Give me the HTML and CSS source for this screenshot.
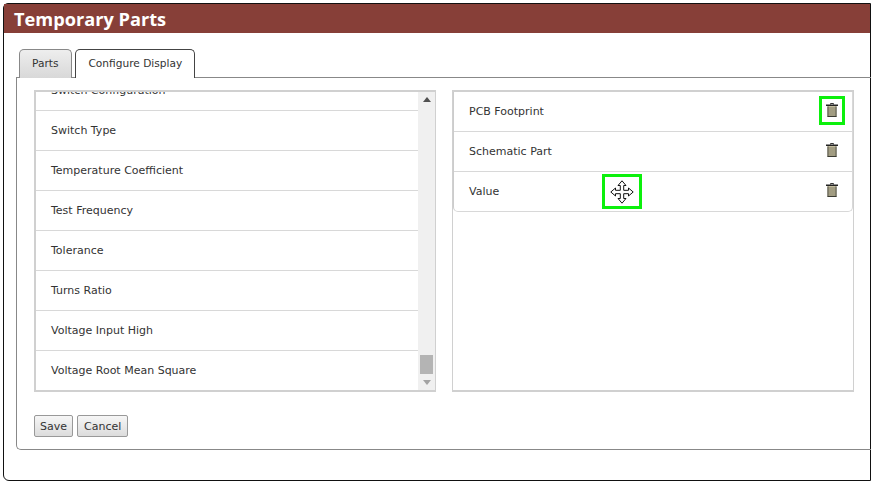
FILE: index.html
```html
<!DOCTYPE html>
<html lang="en">
<head>
<meta charset="utf-8">
<title>Temporary Parts</title>
<link rel="stylesheet" href="styles.css">
</head>
<body>
<svg class="defs" width="0" height="0" aria-hidden="true">
  <defs>
    <symbol id="trash" viewBox="0 0 12 14">
      <path d="M4.500 1.500V.5h3v1" fill="none" stroke="#333" stroke-width="1"/>
      <rect x="0" y="1.500" width="12" height="1.500" fill="#222"/>
      <rect x="1.500" y="3" width="9" height="11" fill="#c4bd9e"/>
      <path d="M2 3.500v10M10 3.500v10M1.500 13.500h9" stroke="#3a3a32" stroke-width="1" fill="none"/>
      <path d="M4 4v9M6 4v9M8 4v9" stroke="#807c66" stroke-width="1" fill="none"/>
    </symbol>
  </defs>
</svg>
<div class="frame">
  <h1 class="title">Temporary Parts</h1>
  <div class="tabs">
    <span class="tab tab-parts">Parts</span>
    <span class="tab tab-active">Configure Display</span>
  </div>
  <div class="panel">
    <div class="columns">
      <div class="box box-left">
        <div class="list-view">
          <ul class="list">
            <li>Switch Configuration</li>
            <li>Switch Type</li>
            <li>Temperature Coefficient</li>
            <li>Test Frequency</li>
            <li>Tolerance</li>
            <li>Turns Ratio</li>
            <li>Voltage Input High</li>
            <li>Voltage Root Mean Square</li>
          </ul>
        </div>
        <div class="scrollbar">
          <span class="arrow arrow-up"></span>
          <span class="thumb"></span>
          <span class="arrow arrow-down"></span>
        </div>
      </div>
      <div class="box box-right">
        <ul class="selected">
          <li>
            <span>PCB Footprint</span>
            <svg class="trash"><use href="#trash"/></svg>
            <span class="mark mark-trash"></span>
          </li>
          <li>
            <span>Schematic Part</span>
            <svg class="trash"><use href="#trash"/></svg>
          </li>
          <li>
            <span>Value</span>
            <svg class="trash"><use href="#trash"/></svg>
            <span class="mark mark-move">
              <svg class="move" viewBox="0 0 24 24">
                <path d="M12 .8 16 5.500h-2.300V10.300H18.500V8L23.200 12 18.500 16V13.700H13.700V18.500H16L12 23.200 8 18.500H10.300V13.700H5.500V16L.8 12 5.500 8V10.300H10.300V5.500H8Z" fill="#fff" stroke="#111" stroke-width="1"/>
              </svg>
            </span>
          </li>
        </ul>
      </div>
    </div>
    <div class="actions">
      <button class="btn btn-save" type="button">Save</button>
      <button class="btn" type="button">Cancel</button>
    </div>
  </div>
</div>
</body>
</html>
```
FILE: styles.css
```css
html, body {
  margin: 0;
  padding: 0;
  background: #fff;
  overflow: hidden;
}

body {
  font-family: "DejaVu Sans", sans-serif;
  font-size: 11px;
  color: #333;
}

.defs {
  display: block;
  height: 0;
}

.frame {
  box-sizing: border-box;
  width: 868px;
  height: 478px;
  margin: 3px 0 0 3px;
  border: 1px solid #111;
  border-radius: 5px 0 0 6px;
}

.title {
  height: 29px;
  margin: 0;
  padding-left: 10px;
  background: #873f38;
  color: #fff;
  font-family: "Open Sans", sans-serif;
  font-size: 18.2px;
  font-weight: 700;
  line-height: 31px;
}

.tabs {
  display: flex;
  gap: 3px;
  height: 29px;
  margin: 16px 0 -1px 15px;
}

.tab {
  box-sizing: border-box;
  height: 29px;
  padding: 0 12px;
  border: 1px solid #888;
  border-bottom: 0;
  border-radius: 5px 5px 0 0;
  background: linear-gradient(#eee, #d8d8d8);
  font-size: 10.6px;
  line-height: 26px;
}

.tab-parts {
  padding-right: 13px;
}

.tab-active {
  position: relative;
  z-index: 1;
  height: 29px;
  border-color: #444;
  background: #fff;
}

.panel {
  box-sizing: border-box;
  height: 373px;
  margin: 0 -4px 0 12px;
  padding: 12px 0 0 17px;
  border: 1px solid #888;
  border-right: 0;
  border-radius: 0 0 0 5px;
}

.columns {
  display: flex;
  gap: 16px;
}

.box {
  box-sizing: border-box;
  width: 402px;
  height: 302px;
  border: 1px solid #d0d0d0;
  border-top-width: 2px;
  border-bottom-width: 2px;
}

.box-left {
  display: flex;
  border-left-width: 2px;
}

.list-view {
  flex: 1;
  overflow: hidden;
}

.list,
.selected {
  margin: 0;
  padding: 0;
  list-style: none;
}

.list {
  margin-top: -21px;
}

.list li {
  box-sizing: border-box;
  height: 40px;
  padding-left: 15px;
  border-bottom: 1px solid #d8d8d8;
  line-height: 39px;
}

.scrollbar {
  display: flex;
  flex-direction: column;
  align-items: center;
  width: 17px;
  background: #f0f0f0;
}

.arrow {
  width: 0;
  height: 0;
  border-left: 4px solid transparent;
  border-right: 4px solid transparent;
}

.arrow-up {
  margin-top: 5px;
  border-bottom: 5px solid #505050;
}

.arrow-down {
  margin-top: 6px;
  border-top: 5px solid #a3a3a3;
}

.thumb {
  width: 13px;
  height: 19px;
  margin-top: 253px;
  background: #b4b4b4;
}

.selected {
  border: 1px solid #d8d8d8;
  border-top: 0;
  border-left-color: #ccc;
  border-radius: 0 0 5px 5px;
}

.selected li {
  position: relative;
  box-sizing: border-box;
  display: flex;
  align-items: center;
  justify-content: space-between;
  height: 40px;
  padding: 0 14px 0 15px;
  border-bottom: 1px solid #d8d8d8;
}

.selected li:last-child {
  height: 39px;
  border-bottom: 0;
  border-radius: 0 0 5px 5px;
}

.trash {
  width: 12px;
  height: 14px;
  margin-bottom: 3px;
}

.mark {
  position: absolute;
  box-sizing: border-box;
  display: flex;
  align-items: center;
  justify-content: center;
  border: 3px solid #0cf00c;
}

.mark-trash {
  top: 4px;
  right: 7px;
  width: 26px;
  height: 29px;
}

.mark-move {
  top: 2px;
  left: 148px;
  width: 40px;
  height: 35px;
}

.move {
  width: 24px;
  height: 24px;
}

.actions {
  display: flex;
  gap: 4px;
  margin-top: 23px;
}

.btn {
  box-sizing: border-box;
  height: 22px;
  padding: 0 6px;
  border: 1px solid #999;
  border-radius: 2px;
  background: linear-gradient(#f6f6f6, #dcdcdc);
  color: #333;
  font: inherit;
}

.btn-save {
  padding: 0 5px;
}
```
